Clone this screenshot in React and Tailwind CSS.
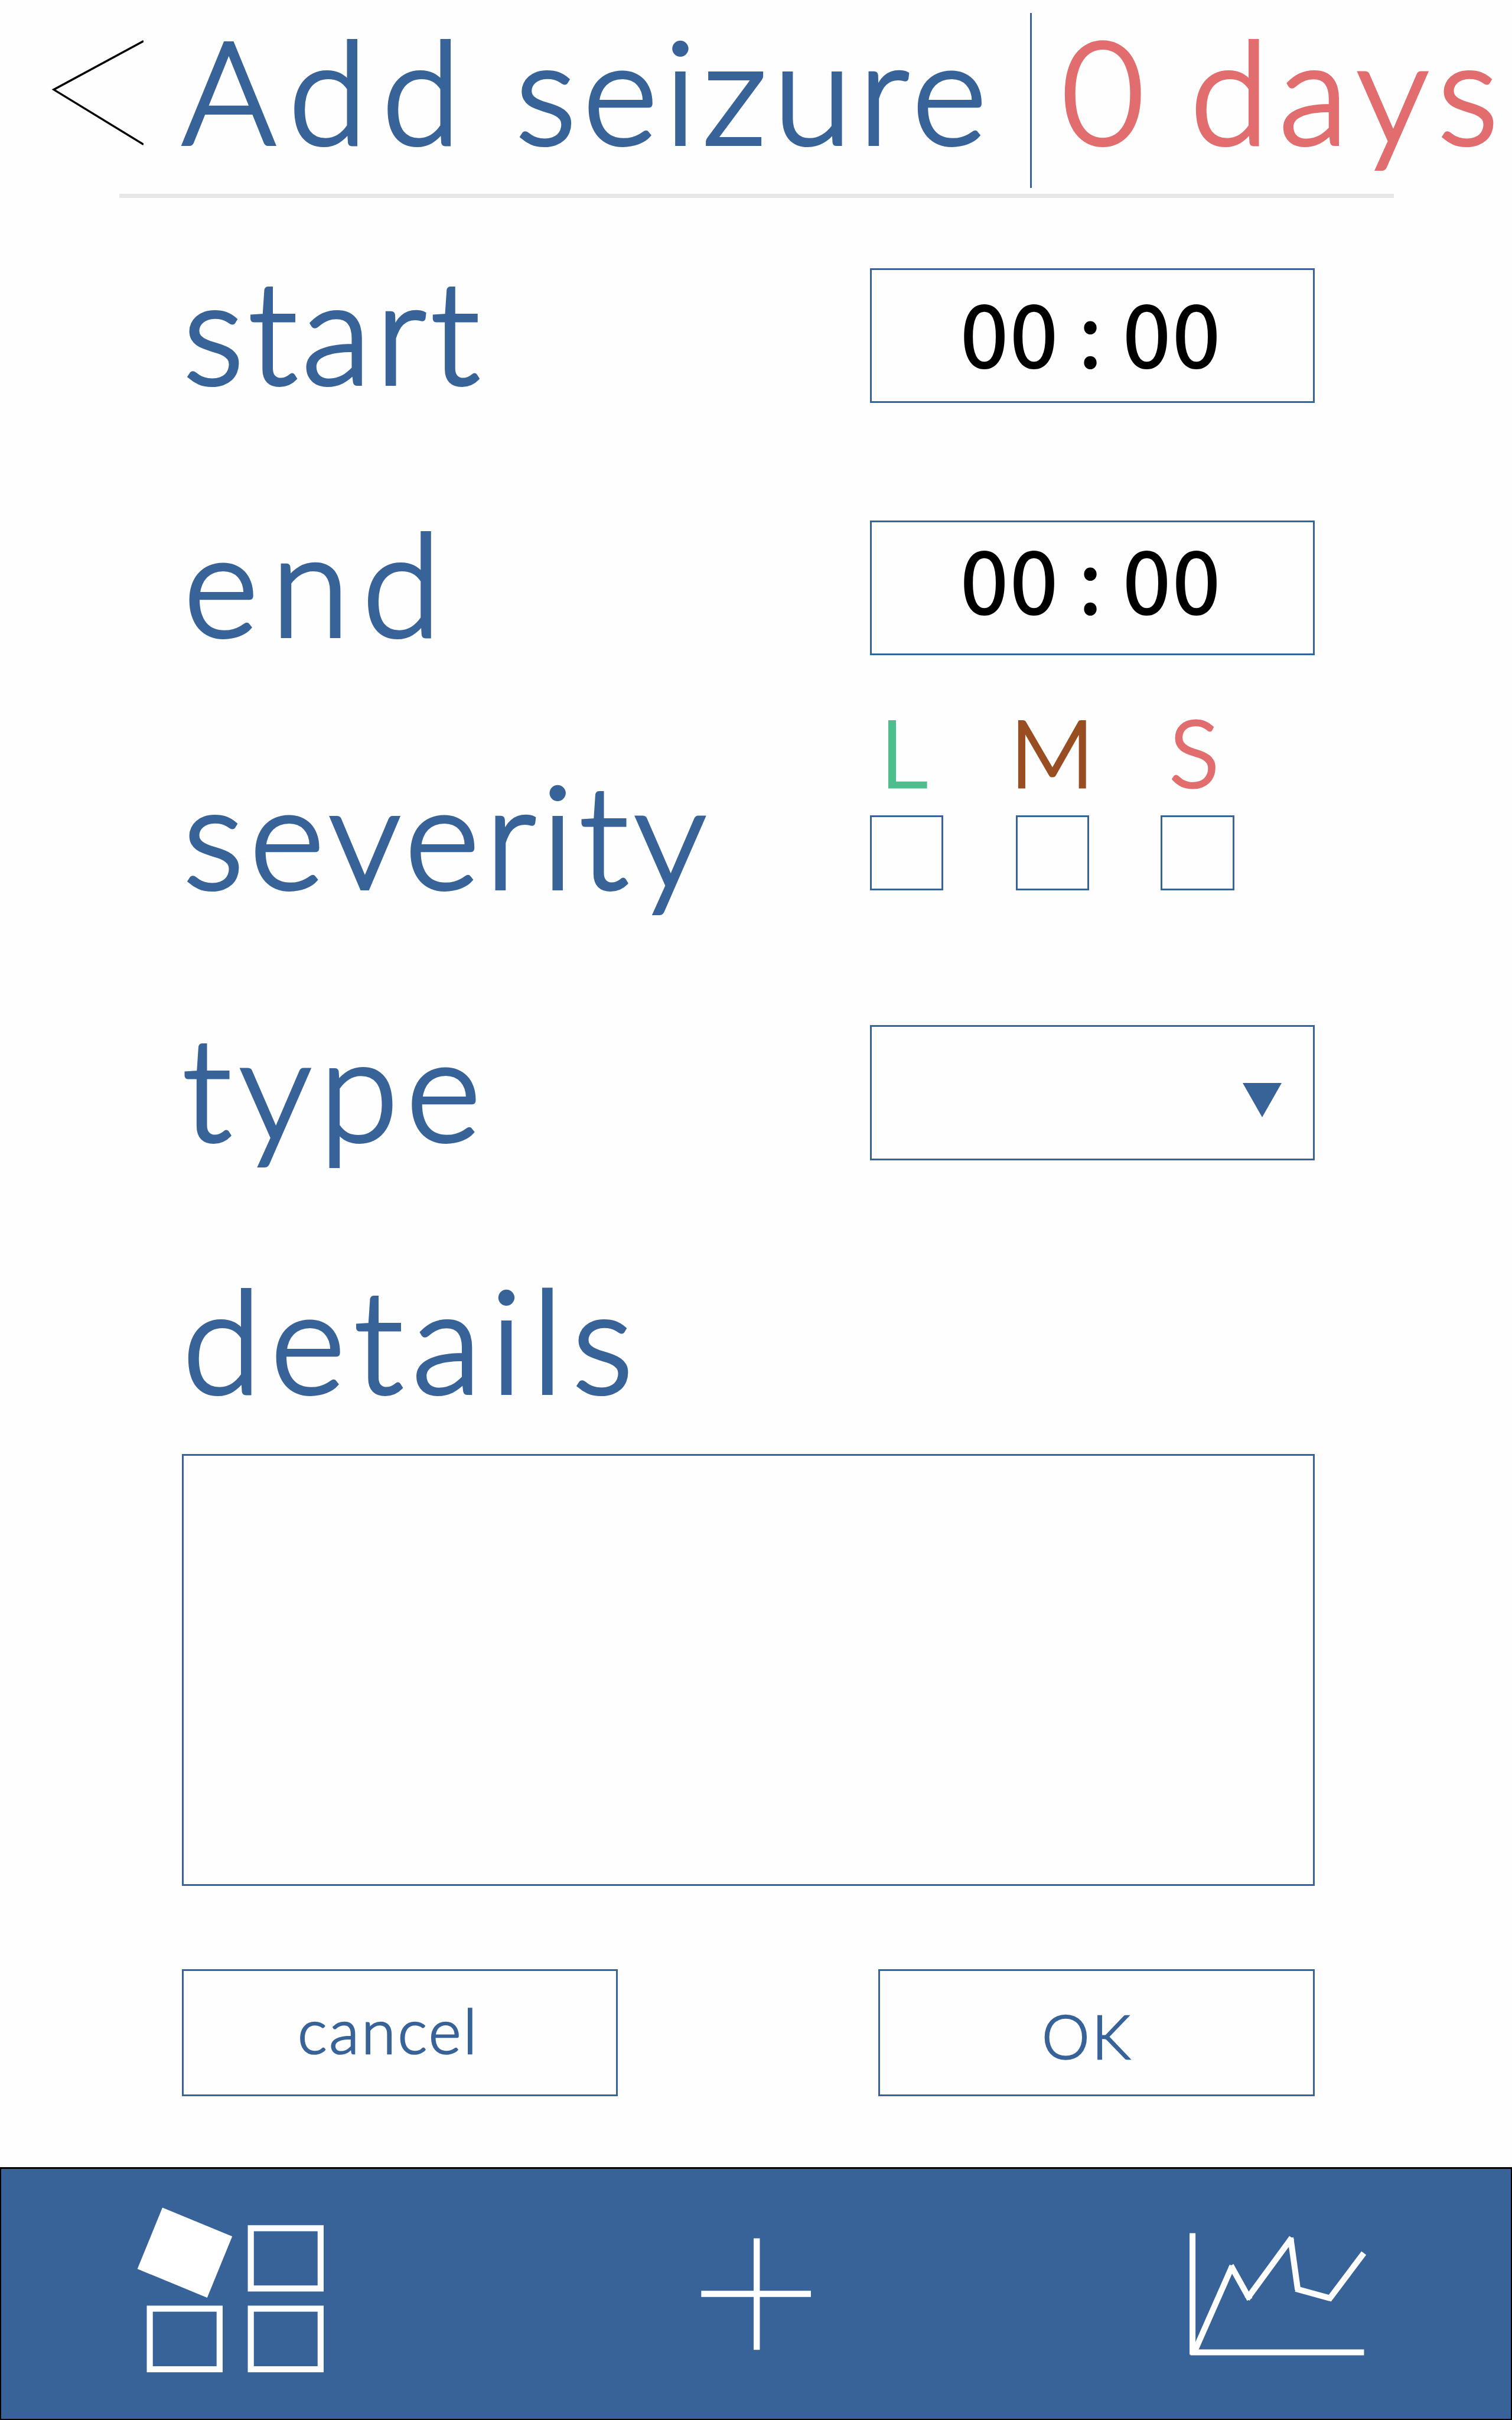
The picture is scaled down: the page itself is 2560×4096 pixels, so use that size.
import React from "react";

const labelClass =
  "-mt-[11px] block h-[228px] whitespace-nowrap text-[242px] leading-[228px] text-[#386398] [-webkit-text-stroke:6px_#386398]";

function Label({ className, children }) {
  return <label className={`${labelClass} ${className}`}>{children}</label>;
}

function TimeField({ className }) {
  return (
    <div
      className={`h-[228px] w-[753px] whitespace-pre border-[3px] border-[#386398] pl-[150px] font-['Noto_Sans_CJK_JP',sans-serif] text-[146px] font-normal tracking-[3px] text-black [-webkit-text-stroke:2px_#000] [word-spacing:-4px] ${className}`}
    >
      00 : 00
    </div>
  );
}

function BackIcon() {
  return (
    <svg className="ml-[85px] mt-[60px] h-[195px] w-[158px]" viewBox="0 0 158 195" fill="none">
      <path d="M158 9.5 L6 91.7 L158 184.5" stroke="#000" strokeWidth="3.4" />
    </svg>
  );
}

function TilesIcon() {
  return (
    <svg className="ml-[229.8px] mt-[65.4px] h-[280.2px] w-[317px]" viewBox="0 0 387 342" fill="none">
      <path d="M52.5 .7 L196.8 60 L145 186.7 L.8 127.3 Z" fill="#fff" />
      <g stroke="#fff" strokeWidth="12.5">
        <rect x="235.2" y="43.2" width="144.3" height="124.5" />
        <rect x="26.4" y="209.4" width="144.3" height="125.2" />
        <rect x="235.2" y="209.4" width="144.3" height="125.2" />
      </g>
    </svg>
  );
}

function PlusIcon() {
  return (
    <svg className="ml-[638.2px] mt-[117px] h-[190px] w-[186.8px]" viewBox="0 0 228 232" fill="none">
      <path d="M115 .5 V231 M.3 115.3 H227" stroke="#fff" strokeWidth="12.8" />
    </svg>
  );
}

function ChartIcon() {
  return (
    <svg className="ml-[640.6px] mt-[107px] h-[209.7px] w-[299.8px]" viewBox="0 0 366 256" fill="none">
      <g stroke="#fff" strokeWidth="12.3">
        <path d="M6.2 2 V253" />
        <path d="M2 248.5 H360.7" />
        <path d="M8.5 251 L88.5 69.5" />
        <path d="M85.5 69 L124.5 139" />
        <path d="M119 138 L211.5 11.5" />
        <path d="M208.8 11.5 L223.8 119" />
        <path d="M219.5 117 L291.5 137" />
        <path d="M287.5 140 L360.3 43.3" />
      </g>
    </svg>
  );
}

const severities = [
  {
    letter: "L",
    letterClass: "w-[220px] text-[#4fbe8f] [-webkit-text-stroke:5px_#4fbe8f]",
    boxClass: "w-[124px] mr-[123px]",
  },
  {
    letter: "M",
    letterClass: "w-[270px] text-[#994e22] [-webkit-text-stroke:5px_#994e22]",
    boxClass: "w-[124px] mr-[121px]",
  },
  {
    letter: "S",
    letterClass: "text-[#e26d6e] [-webkit-text-stroke:5px_#e26d6e]",
    boxClass: "w-[125px]",
  },
];

export default function App() {
  return (
    <div className="flex h-[4096px] w-[2560px] flex-col overflow-hidden bg-[#fefefe] font-['Lato',sans-serif] font-light">
      <header className="flex h-[328px] items-start whitespace-nowrap text-[242px] leading-[238px]">
        <BackIcon />
        <h1 className="ml-[65px] mt-[32px] w-[1436px] tracking-[11.6px] text-[#386398] [-webkit-text-stroke:6px_#386398] [word-spacing:-9px]">
          <span className="tracking-[24.6px]">Add</span> seizure
        </h1>
        <div className="mt-[22px] h-[296px] w-[3px] bg-[#386398]" />
        <p className="ml-[50px] mt-[32px] tracking-[17px] text-[#e26d6e] [-webkit-text-stroke:6px_#e26d6e] [word-spacing:-22px]">
          0 days
        </p>
      </header>
      <div className="ml-[202px] h-[7px] w-[2158px] shrink-0 bg-[#e7e7e7]" />

      <main className="ml-[308px] w-[1918px] pt-[119px]">
        <div className="flex h-[427px] items-start justify-between">
          <Label className="ml-[2px] tracking-[7.7px]">start</Label>
          <TimeField className="leading-[203px]" />
        </div>
        <div className="flex h-[427px] items-start justify-between">
          <Label className="ml-[3px] tracking-[21.5px]">end</Label>
          <TimeField className="leading-[183px]" />
        </div>
        <div className="flex h-[427px] items-start justify-between">
          <Label className="ml-[2px] tracking-[10px]">severity</Label>
          <div className="-mt-[118px] w-[753px]">
            <div className="mb-[28px] flex pl-[17px] text-[157px] leading-[162px]">
              {severities.map((s) => (
                <span key={s.letter} className={s.letterClass}>{s.letter}</span>
              ))}
            </div>
            <div className="flex">
              {severities.map((s) => (
                <div key={s.letter} className={`h-[127px] border-[3px] border-[#386398] ${s.boxClass}`} />
              ))}
            </div>
          </div>
        </div>
        <div className="flex h-[427px] items-start justify-between">
          <Label className="ml-[1px] tracking-[13.7px]">type</Label>
          <div className="flex h-[229px] w-[753px] justify-end border-[3px] border-[#386398] pr-[53px] pt-[95px]">
            <svg className="h-[58px] w-[66px]" viewBox="0 0 66 58">
              <path d="M0 0 H66 L33 58 Z" fill="#386398" />
            </svg>
          </div>
        </div>
        <div className="flex h-[299px] items-start">
          <Label className="ml-[1px] tracking-[15.6px]">details</Label>
        </div>
        <div className="h-[731px] border-[3px] border-[#386398]" />
        <div className="mt-[141px] flex justify-between text-[#386398] [-webkit-text-stroke:2.6px_#386398]">
          <button className="flex h-[215px] w-[738px] items-start border-[3px] border-[#386398] pl-[193px] text-[105px] leading-[199px] tracking-[3.8px]">
            cancel
          </button>
          <button className="flex h-[215px] w-[739px] items-start border-[3px] border-[#386398] pl-[274px] pt-[9px] text-[102px] leading-[201px] tracking-[4px]">
            OK
          </button>
        </div>
      </main>

      <nav className="mt-auto flex h-[428px] shrink-0 items-start border-2 border-t-[3px] border-black bg-[#386398]">
        <TilesIcon />
        <PlusIcon />
        <ChartIcon />
      </nav>
    </div>
  );
}
